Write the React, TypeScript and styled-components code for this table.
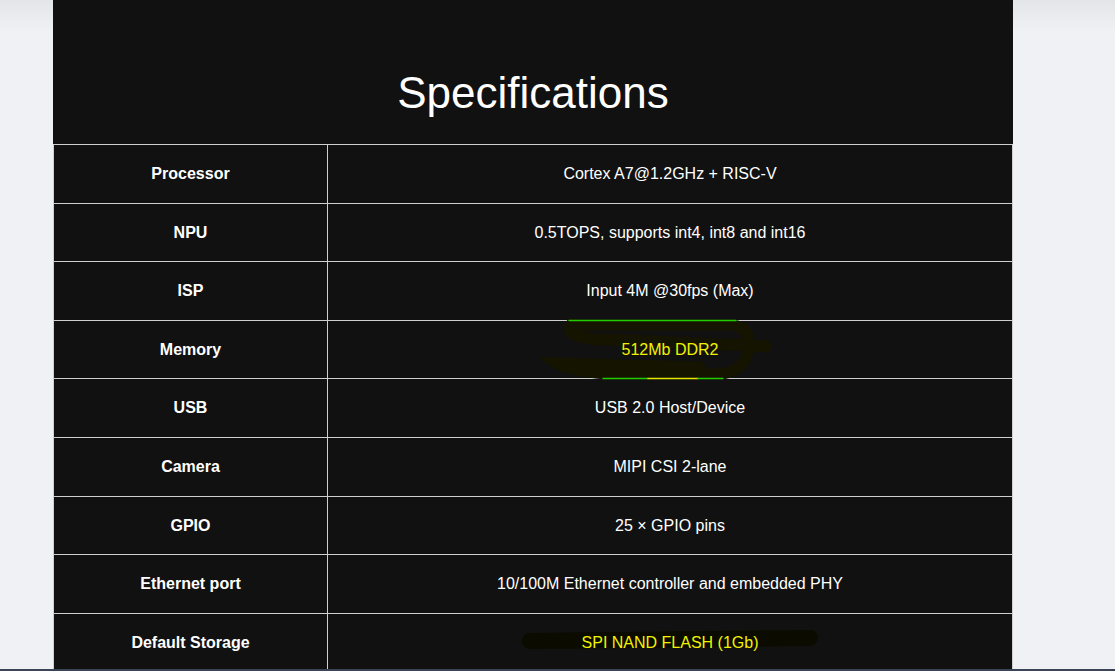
import React from "react";
import styled, { createGlobalStyle } from "styled-components";

const GlobalStyle = createGlobalStyle`
  html, body {
    margin: 0;
    padding: 0;
  }
  body {
    min-height: 100vh;
    overflow: hidden;
    background: linear-gradient(#e4e5e8 0, #f0f1f5 32px) no-repeat, #f0f1f5;
    font-family: "Liberation Sans", Arial, Helvetica, sans-serif;
  }
`;

const Page = styled.div`
  display: flex;
  padding-left: 53px;
`;

const Panel = styled.section`
  width: 960px;
  background: #111111;
`;

const Title = styled.h2`
  margin: 0;
  padding: 68px 0 26px;
  font-size: 44px;
  line-height: 50px;
  font-weight: 400;
  color: #ffffff;
  text-align: center;
`;

const Table = styled.table`
  width: 100%;
  border-collapse: collapse;
  table-layout: fixed;
`;

const Label = styled.th`
  width: 249px;
  padding: 16px 12px;
  border: 1px solid #cfcfcf;
  font-size: 16px;
  line-height: 25.6px;
  font-weight: 700;
  color: #ffffff;
  text-align: center;
  vertical-align: middle;
`;

const Value = styled.td<{ $mark?: boolean }>`
  position: relative;
  padding: 16px 12px;
  border: 1px solid #cfcfcf;
  font-size: 16px;
  line-height: 25.6px;
  color: ${({ $mark }) => ($mark ? "#f2f200" : "#ffffff")};
  text-align: center;
  vertical-align: middle;
`;

const ValueText = styled.span`
  position: relative;
  z-index: 1;
`;

const Scribble = styled.svg`
  position: absolute;
  left: 0;
  top: 0;
  width: 1px;
  height: 1px;
  overflow: visible;
  pointer-events: none;
`;

const BottomBar = styled.div`
  position: fixed;
  left: 0;
  right: 0;
  bottom: 0;
  height: 2px;
  background: #3a4456;
`;

// marker scribbles, drawn in page coordinates shifted to the cell's corner
const MemoryMark = () => (
  <Scribble>
    <g transform="translate(-328 -321)" fill="none" strokeLinecap="round">
      <path
        d="M 572 324 Q 562 334 592 339 L 766 346"
        stroke="#141400"
        strokeWidth="12"
      />
      <path
        d="M 574 325 L 733 325 Q 750 328 749 346 Q 747 370 722 374 L 606 374 Q 566 370 556 363 L 700 367"
        stroke="#141400"
        strokeWidth="11"
      />
      <line x1="569" y1="320.5" x2="736" y2="320.5" stroke="#22cc00" strokeWidth="1.5" />
      <line x1="603" y1="378.5" x2="648" y2="378.5" stroke="#22cc00" strokeWidth="1.5" />
      <line x1="648" y1="378.5" x2="698" y2="378.5" stroke="#e6e600" strokeWidth="1.5" />
      <line x1="698" y1="378.5" x2="723" y2="378.5" stroke="#22cc00" strokeWidth="1.5" />
    </g>
  </Scribble>
);

const StorageMark = () => (
  <Scribble>
    <g transform="translate(-328 -614)" fill="none" strokeLinecap="round">
      <path d="M 530 641 L 810 638" stroke="#0b0b00" strokeWidth="16" />
    </g>
  </Scribble>
);

const specs: { label: string; value: string; mark?: "memory" | "storage" }[] = [
  { label: "Processor", value: "Cortex A7@1.2GHz + RISC-V" },
  { label: "NPU", value: "0.5TOPS, supports int4, int8 and int16" },
  { label: "ISP", value: "Input 4M @30fps (Max)" },
  { label: "Memory", value: "512Mb DDR2", mark: "memory" },
  { label: "USB", value: "USB 2.0 Host/Device" },
  { label: "Camera", value: "MIPI CSI 2-lane" },
  { label: "GPIO", value: "25 × GPIO pins" },
  { label: "Ethernet port", value: "10/100M Ethernet controller and embedded PHY" },
  { label: "Default Storage", value: "SPI NAND FLASH (1Gb)", mark: "storage" },
];

const App = () => {
  return (
    <>
      <GlobalStyle />
      <Page>
        <Panel>
          <Title>Specifications</Title>
          <Table>
            <tbody>
              {specs.map((row) => (
                <tr key={row.label}>
                  <Label>{row.label}</Label>
                  <Value $mark={!!row.mark}>
                    {row.mark === "memory" && <MemoryMark />}
                    {row.mark === "storage" && <StorageMark />}
                    <ValueText>{row.value}</ValueText>
                  </Value>
                </tr>
              ))}
            </tbody>
          </Table>
        </Panel>
      </Page>
      <BottomBar />
    </>
  );
};

export default App;
